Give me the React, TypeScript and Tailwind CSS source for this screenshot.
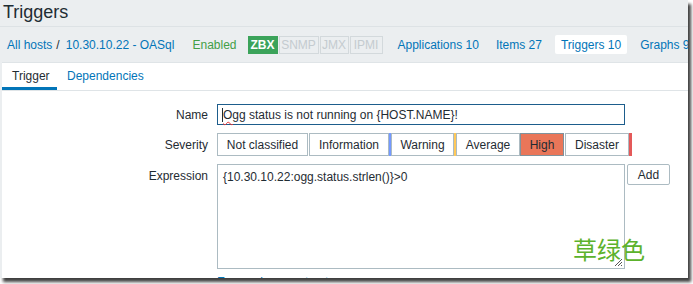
import React from 'react';

const severities = [
  { label: 'Not classified', w: 'w-[91px]', stripe: 'w-[1px] bg-white', active: false },
  { label: 'Information', w: 'w-[80px]', stripe: 'w-[2px] bg-[#7499ff]', active: false },
  { label: 'Warning', w: 'w-[63px]', stripe: 'w-[2px] bg-[#ffc859]', active: false },
  { label: 'Average', w: 'w-[64px]', stripe: 'w-0', active: false },
  { label: 'High', w: 'w-[44px]', stripe: 'w-[1px] bg-white', active: true },
  { label: 'Disaster', w: 'w-[64px]', stripe: 'w-[3px] bg-[#e45959]', active: false },
];

const Tag: React.FC<{ label: string; w: string; on?: boolean }> = ({ label, w, on }) => (
  <span
    className={`${w} h-[18px] flex items-center justify-center border text-[12px] ${
      on ? 'bg-[#3ba35a] border-[#3ba35a] text-white font-bold' : 'border-[#d3d9dc] text-[#c4cbcf]'
    }`}
  >
    {label}
  </span>
);

export default function App() {
  return (
    <div className="w-[693px] h-[284px] bg-white">
      <div className="relative w-[688px] h-[278px] overflow-hidden bg-[#ebeef0] text-[12px] text-[#1f2c33] font-['Liberation_Sans',Arial,sans-serif] shadow-[3px_4px_3px_rgba(0,0,0,0.75)]">
        {/* Header */}
        <div className="h-[27px] px-[3px] text-[18px] leading-[24px] border-b border-[#dde2e5]">Triggers</div>

        {/* Host navigation */}
        <div className="h-[35px] flex items-center whitespace-nowrap [&>*]:shrink-0">
          <a className="ml-[7px] text-[#0275b8]">All hosts</a>
          <span className="ml-[4px]">/</span>
          <a className="ml-[6px] text-[#0275b8]">10.30.10.22 - OASql</a>
          <span className="ml-[18px] text-[#429e47]">Enabled</span>
          <div className="ml-[11px] flex gap-[1px]">
            <Tag label="ZBX" w="w-[30px]" on />
            <Tag label="SNMP" w="w-[40px]" />
            <Tag label="JMX" w="w-[29px]" />
            <Tag label="IPMI" w="w-[33px]" />
          </div>
          <a className="ml-[15px] text-[#0275b8]">Applications 10</a>
          <a className="ml-[17px] text-[#0275b8]">Items 27</a>
          <a className="ml-[13px] h-[19px] px-[6px] flex items-center bg-white rounded-[2px] text-[#0275b8]">Triggers 10</a>
          <a className="ml-[13px] text-[#0275b8]">Graphs 9</a>
        </div>

        {/* Panel */}
        <div className="ml-[2px] h-[300px] bg-white border-t border-[#dfe4e7]">
          <div className="flex h-[28px] border-b border-[#dfe4e7]">
            <div className="w-[55px] px-[10px] pt-[1px] flex items-center border-b-[3px] border-[#0275b8]">Trigger</div>
            <div className="px-[10px] pt-[1px] flex items-center pb-[3px] text-[#0275b8]">Dependencies</div>
          </div>

          <div className="pt-[13px] flex flex-col gap-[8px]">
            <div className="flex items-center gap-[9px]">
              <div className="w-[206px] text-right">Name</div>
              <div className="w-[408px] h-[21px] px-[4px] flex items-center border border-[#1d5d8c]">
                <span className="w-[1px] h-[14px] bg-[#1f2c33]" />
                <span className="underline decoration-wavy decoration-[#e33] decoration-1 underline-offset-2">Ogg</span>
                <span>&nbsp;status is not running on {'{HOST.NAME}'}!</span>
              </div>
            </div>

            <div className="flex items-center gap-[9px]">
              <div className="w-[206px] text-right">Severity</div>
              <div className="flex">
                {severities.map((s) => (
                  <React.Fragment key={s.label}>
                    <div
                      className={`${s.w} h-[23px] flex items-center justify-center border ${
                        s.active ? 'bg-[#e97659] border-[#7f929c]' : 'bg-white border-[#acbbc2]'
                      }`}
                    >
                      {s.label}
                    </div>
                    <span className={`${s.stripe} h-[23px]`} />
                  </React.Fragment>
                ))}
              </div>
            </div>

            <div className="flex items-start gap-[9px]">
              <div className="w-[206px] pt-[3px] text-right">Expression</div>
              <div className="flex flex-col">
                <div className="relative w-[408px] h-[105px] px-[5px] pt-[3px] border border-[#acbbc2]">
                  {'{10.30.10.22:ogg.status.strlen()}>0'}
                  <svg className="absolute right-[1px] bottom-[1px]" width="10" height="10" viewBox="0 0 10 10">
                    <path d="M9 2 L2 9 M9 5 L5 9 M9 8 L8 9" stroke="#555" strokeWidth="1" />
                  </svg>
                </div>
                <a className="mt-[6px] text-[#0275b8] leading-[14px]">Expression constructor</a>
              </div>
              <button className="-ml-[7px] w-[43px] h-[21px] border border-[#acbbc2] rounded-[2px] bg-white text-[12px]">
                Add
              </button>
            </div>
          </div>
        </div>

        <div className="absolute left-[573px] top-[233px] text-[24px] leading-[32px] text-[#5cb22c] font-['Noto_Sans_CJK_SC',sans-serif]">
          草绿色
        </div>
      </div>
    </div>
  );
}
